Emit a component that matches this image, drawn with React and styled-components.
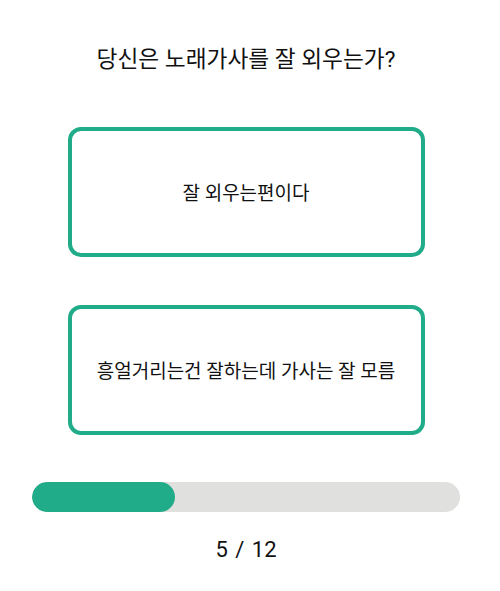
import React from "react";
import styled, { createGlobalStyle } from "styled-components";

const Global = createGlobalStyle`
  html, body { margin: 0; padding: 0; background: #fff; }
  body { font-family: Roboto, "Noto Sans CJK KR", sans-serif; color: #111; }
`;

const Page = styled.div`
  width: 492px;
  box-sizing: border-box;
  padding: 45px 32px 0;
  display: flex;
  flex-direction: column;
  align-items: center;
`;

const Title = styled.h1`
  margin: 0;
  font-size: 22.7px;
  font-weight: 400;
  line-height: 30px;
  text-align: center;
`;

const Options = styled.div`
  margin-top: 51.5px;
  display: flex;
  flex-direction: column;
  gap: 48px;
`;

const Option = styled.button`
  width: 357px;
  height: 130px;
  box-sizing: border-box;
  border: 4px solid #20ac88;
  border-radius: 13px;
  background: #fff;
  font-family: inherit;
  font-size: 19px;
  color: #111;
  display: flex;
  align-items: center;
  justify-content: center;
  padding: 0;
  cursor: pointer;
`;

const Track = styled.div`
  margin-top: 47.5px;
  width: 428px;
  height: 30px;
  border-radius: 15px;
  background: #e0e0de;
  overflow: hidden;
  display: flex;
`;

const Fill = styled.div`
  height: 100%;
  border-radius: 15px;
  background: #20ac88;
`;

const Counter = styled.div`
  margin-top: 23px;
  font-size: 22px;
  word-spacing: 2px;
  line-height: 30px;
`;

export default function App() {
  const current = 5;
  const total = 12;
  const pct = ((current - 1) / total) * 100;
  return (
    <>
      <Global />
      <Page>
        <Title>당신은 노래가사를 잘 외우는가?</Title>
        <Options>
          <Option>잘 외우는편이다</Option>
          <Option>흥얼거리는건 잘하는데 가사는 잘 모름</Option>
        </Options>
        <Track>
          <Fill style={{ width: `${pct}%` }} />
        </Track>
        <Counter>
          {current} / {total}
        </Counter>
      </Page>
    </>
  );
}
